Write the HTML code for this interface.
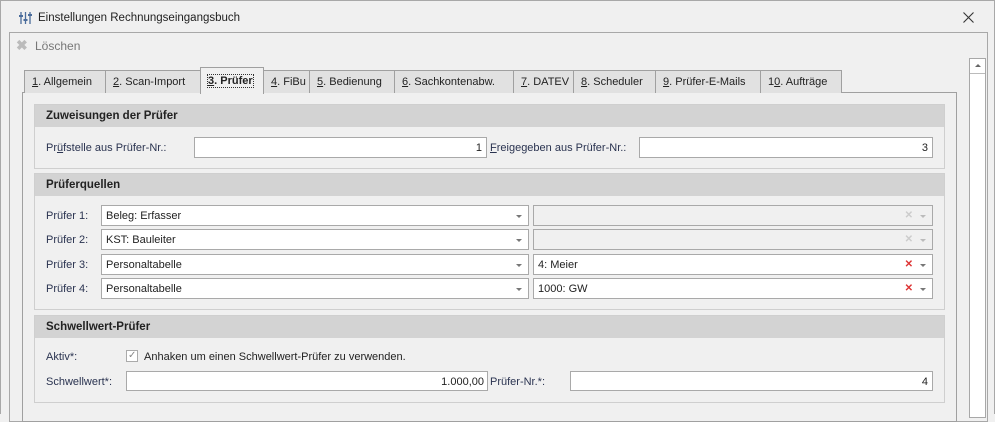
<!DOCTYPE html>
<html><head><meta charset="utf-8"><style>
*{box-sizing:border-box;margin:0;padding:0}
body{width:995px;height:414px;overflow:hidden;background:#f0f0f0;font-family:"Liberation Sans",sans-serif;font-size:11px;color:#222;position:relative}
.a{position:absolute}
.t{white-space:nowrap}
.box{position:absolute;border:1px solid #a9a9a9;background:#fff}
.lbl{position:absolute;color:#2a3350;white-space:nowrap;font-size:11px}
.tab{position:absolute;top:70px;height:23px;border:1px solid #a0a0a0;border-bottom:none;background:#e1e1e1;padding:5px 0 0 7px;font-size:11px;white-space:nowrap}
.sec{position:absolute;left:34px;width:911px;border:1px solid #cfcfcf;background:#f0f0f0}
.hd{height:22px;background:#d3d3d3;font-weight:bold;padding:5px 0 0 11px;font-size:11.5px;color:#222}
.arr{position:absolute;right:6px;top:9px;width:0;height:0;border-left:3px solid transparent;border-right:3px solid transparent;border-top:3px solid #777}
.x{position:absolute;font-size:10px;font-weight:bold;top:4px}
.v{position:absolute;left:4px;top:4px}
</style></head><body>
<div class="a" style="left:0;top:0;width:995px;height:414px;border:1px solid #a8a8a8;border-bottom:none"></div>
<svg class="a" style="left:19px;top:11px" width="13" height="14" viewBox="0 0 13 14"><g stroke="#4a6c9b" stroke-width="1.3"><line x1="2" y1="1" x2="2" y2="13"/><line x1="6.5" y1="1" x2="6.5" y2="13"/><line x1="11" y1="1" x2="11" y2="13"/></g><g fill="#4a6c9b"><rect x="0" y="4" width="4" height="2"/><rect x="4.5" y="8" width="4" height="2"/><rect x="9" y="3" width="4" height="2"/></g></svg>
<div class="a t" style="left:38px;top:12px;font-size:11.5px">Einstellungen Rechnungseingangsbuch</div>
<svg class="a" style="left:963px;top:12px" width="11" height="11" viewBox="0 0 11 11"><path d="M0.5 0.5L10.5 10.5M10.5 0.5L0.5 10.5" stroke="#333" stroke-width="1.1"/></svg>
<div class="a" style="left:9px;top:32px;width:979px;height:390px;border:1px solid #a8a8a8"></div>
<div class="a t" style="left:16px;top:37px;font-size:14px;color:#bbb;font-weight:bold">✖</div>
<div class="a t" style="left:35px;top:39px;color:#777;font-size:12px">Löschen</div>
<div class="a" style="left:22px;top:92px;width:935px;height:330px;border:1px solid #a0a0a0;background:#f0f0f0"></div>
<div class="tab" style="left:24px;width:82px"><u>1</u>. Allgemein</div>
<div class="tab" style="left:105px;width:96px"><u>2</u>. Scan-Import</div>
<div class="tab" style="left:200px;width:64px;top:67px;height:27px;background:#f0f0f0;font-weight:bold;padding-top:7px;z-index:2"><span style="outline:1px dotted #333"><u>3</u>. Prüfer</span></div>
<div class="tab" style="left:263px;width:47px"><u>4</u>. FiBu</div>
<div class="tab" style="left:309px;width:86px"><u>5</u>. Bedienung</div>
<div class="tab" style="left:394px;width:120px"><u>6</u>. Sachkontenabw.</div>
<div class="tab" style="left:513px;width:61px"><u>7</u>. DATEV</div>
<div class="tab" style="left:573px;width:83px"><u>8</u>. Scheduler</div>
<div class="tab" style="left:655px;width:106px"><u>9</u>. Prüfer-E-Mails</div>
<div class="tab" style="left:760px;width:82px">1<u>0</u>. Aufträge</div>
<div class="a" style="left:969px;top:58px;width:17px;height:360px;border:1px solid #a8a8a8;background:#fff"></div>
<div class="a" style="left:970px;top:59px;width:15px;height:15px;border-bottom:1px solid #bbb;background:#fff"></div>
<div class="a" style="left:975px;top:64px;border-left:3px solid transparent;border-right:3px solid transparent;border-bottom:3px solid #666"></div>
<div class="sec" style="top:104px;height:65px"><div class="hd">Zuweisungen der Prüfer</div></div>
<div class="lbl" style="left:46px;top:142px">Pr<u>ü</u>fstelle aus Prüfer-Nr.:</div>
<div class="box" style="left:194px;top:137px;width:293px;height:21px"><span class="a" style="right:4px;top:4px">1</span></div>
<div class="lbl" style="left:490px;top:142px"><u>F</u>reigegeben aus Prüfer-Nr.:</div>
<div class="box" style="left:639px;top:137px;width:294px;height:21px"><span class="a" style="right:4px;top:4px">3</span></div>
<div class="sec" style="top:173px;height:137px"><div class="hd">Prüferquellen</div></div>
<div class="lbl" style="left:46px;top:210px">Prüfer 1:</div>
<div class="box" style="left:101px;top:205px;width:428px;height:21px"><span class="v">Beleg: Erfasser</span><i class="arr"></i></div>
<div class="box" style="left:533px;top:205px;width:400px;height:21px;background:#f0f0f0"><span class="x" style="right:19px;color:#ccc">✕</span><i class="arr" style="border-top-color:#bbb"></i></div>
<div class="lbl" style="left:46px;top:234px">Prüfer 2:</div>
<div class="box" style="left:101px;top:229px;width:428px;height:21px"><span class="v">KST: Bauleiter</span><i class="arr"></i></div>
<div class="box" style="left:533px;top:229px;width:400px;height:21px;background:#f0f0f0"><span class="x" style="right:19px;color:#ccc">✕</span><i class="arr" style="border-top-color:#bbb"></i></div>
<div class="lbl" style="left:46px;top:259px">Prüfer 3:</div>
<div class="box" style="left:101px;top:254px;width:428px;height:21px"><span class="v">Personaltabelle</span><i class="arr"></i></div>
<div class="box" style="left:533px;top:254px;width:400px;height:21px"><span class="v">4: Meier</span><span class="x" style="right:19px;color:#d33">✕</span><i class="arr"></i></div>
<div class="lbl" style="left:46px;top:283px">Prüfer 4:</div>
<div class="box" style="left:101px;top:278px;width:428px;height:21px"><span class="v">Personaltabelle</span><i class="arr"></i></div>
<div class="box" style="left:533px;top:278px;width:400px;height:21px"><span class="v">1000: GW</span><span class="x" style="right:19px;color:#d33">✕</span><i class="arr"></i></div>
<div class="sec" style="top:315px;height:88px"><div class="hd">Schwellwert-Prüfer</div></div>
<div class="lbl" style="left:46px;top:351px">Aktiv*:</div>
<div class="box" style="left:126px;top:350px;width:12px;height:12px;border-color:#aaa"><span class="a" style="left:1px;top:-1px;font-size:10px;color:#888">✓</span></div>
<div class="lbl" style="left:144px;top:351px;color:#222">Anhaken um einen Schwellwert-Prüfer zu verwenden.</div>
<div class="lbl" style="left:46px;top:376px">Schwellwert*:</div>
<div class="box" style="left:126px;top:371px;width:362px;height:20px"><span class="a" style="right:3px;top:4px">1.000,00</span></div>
<div class="lbl" style="left:490px;top:376px">Prüfer-Nr.*:</div>
<div class="box" style="left:570px;top:371px;width:363px;height:20px"><span class="a" style="right:4px;top:4px">4</span></div>
</body></html>
